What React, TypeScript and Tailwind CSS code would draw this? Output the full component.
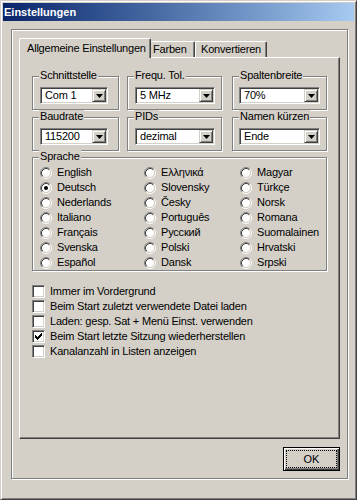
import React from 'react';

const LANGS = [
  ['English', 'Deutsch', 'Nederlands', 'Italiano', 'Français', 'Svenska', 'Español'],
  ['Ελληνικά', 'Slovensky', 'Česky', 'Português', 'Русский', 'Polski', 'Dansk'],
  ['Magyar', 'Türkçe', 'Norsk', 'Romana', 'Suomalainen', 'Hrvatski', 'Srpski'],
];

const OPTIONS = [
  { label: 'Immer im Vordergrund', checked: false },
  { label: 'Beim Start zuletzt verwendete Datei laden', checked: false },
  { label: 'Laden: gesp. Sat + Menü Einst. verwenden', checked: false },
  { label: 'Beim Start letzte Sitzung wiederherstellen', checked: true },
  { label: 'Kanalanzahl in Listen anzeigen', checked: false },
];

function Group({ label, className, children }: { label: string; className: string; children?: React.ReactNode }) {
  return (
    <div className={`relative border border-[#808080] shadow-[inset_1px_1px_0_#ffffff,1px_1px_0_#ffffff] ${className}`}>
      <span className="absolute left-[6px] top-[-8px] bg-[#d4d0c8] px-px leading-[13px]">{label}</span>
      {children}
    </div>
  );
}

function Combo({ value, className }: { value: string; className: string }) {
  return (
    <div
      className={`flex h-[17px] border border-t-[#808080] border-l-[#808080] border-r-white border-b-white bg-white p-px shadow-[inset_1px_1px_0_#404040,inset_-1px_-1px_0_#d4d0c8] ${className}`}
    >
      <span className="flex-1 pl-[3px] leading-[13px]">{value}</span>
      <div className="flex w-[14px] items-center justify-center border border-t-[#d4d0c8] border-l-[#d4d0c8] border-r-[#404040] border-b-[#404040] bg-[#d4d0c8] shadow-[inset_1px_1px_0_#ffffff,inset_-1px_-1px_0_#808080]">
        <svg width="7" height="4" viewBox="0 0 7 4">
          <polygon points="0,0 7,0 3.5,4" fill="#000" />
        </svg>
      </div>
    </div>
  );
}

function Radio({ checked }: { checked?: boolean }) {
  return (
    <svg width="12" height="12" viewBox="0 0 12 12" className="shrink-0">
      <circle cx="6" cy="6" r="4" fill="#ffffff" />
      <path d="M2.11 9.89A5.5 5.5 0 0 1 9.89 2.11" fill="none" stroke="#808080" />
      <path d="M9.89 2.11A5.5 5.5 0 0 1 2.11 9.89" fill="none" stroke="#ffffff" />
      <path d="M2.82 9.18A4.5 4.5 0 0 1 9.18 2.82" fill="none" stroke="#404040" />
      <path d="M9.18 2.82A4.5 4.5 0 0 1 2.82 9.18" fill="none" stroke="#d4d0c8" />
      {checked && <circle cx="6" cy="6" r="2" fill="#000000" />}
    </svg>
  );
}

function Checkbox({ checked }: { checked?: boolean }) {
  return (
    <div className="h-[13px] w-[13px] shrink-0 border border-t-[#808080] border-l-[#808080] border-r-white border-b-white bg-white shadow-[inset_1px_1px_0_#404040,inset_-1px_-1px_0_#d4d0c8]">
      {checked && (
        <svg width="11" height="11" viewBox="0 0 11 11">
          <rect x="2" y="4" width="1" height="3" fill="#000" />
          <rect x="3" y="5" width="1" height="3" fill="#000" />
          <rect x="4" y="6" width="1" height="3" fill="#000" />
          <rect x="5" y="5" width="1" height="3" fill="#000" />
          <rect x="6" y="4" width="1" height="3" fill="#000" />
          <rect x="7" y="3" width="1" height="3" fill="#000" />
          <rect x="8" y="2" width="1" height="3" fill="#000" />
        </svg>
      )}
    </div>
  );
}

export default function App() {
  return (
    <div className="h-[500px] w-[357px] border border-t-[#d4d0c8] border-l-[#d4d0c8] border-r-[#404040] border-b-[#404040] bg-[#d4d0c8] p-[2px] font-['Liberation_Sans',Arial,sans-serif] text-[11px] tracking-[-0.2px] text-black shadow-[inset_1px_1px_0_#ffffff,inset_-1px_-1px_0_#808080]">
      {/* title bar */}
      <div className="flex h-[18px] items-center bg-gradient-to-r from-[#0a246a] to-[#a6caf0] pl-px text-[11px] font-bold tracking-normal text-white">
        Einstellungen
      </div>

      {/* etched frame */}
      <div className="ml-[8px] mt-[8px] flex h-[450px] w-[337px] flex-col border border-[#808080] pb-[7px] pl-[7px] pt-[8px] shadow-[inset_1px_1px_0_#ffffff,1px_1px_0_#ffffff]">
        <div className="flex w-[321px] flex-col">
          {/* tabs */}
          <div className="flex h-[19px] items-end">
            <div className="relative top-px z-10 flex h-[20px] w-[132px] items-center rounded-t-[2px] border-l border-r border-t border-l-white border-r-[#404040] border-t-white bg-[#d4d0c8] pl-[7px] shadow-[inset_-1px_0_0_#808080]">
              Allgemeine Einstellungen
            </div>
            <div className="flex h-[16px] w-[44px] items-center rounded-t-[2px] border-r border-t border-r-[#404040] border-t-white pl-[2px] shadow-[inset_-1px_0_0_#808080]">
              Farben
            </div>
            <div className="flex h-[16px] w-[72px] items-center rounded-t-[2px] border-l border-r border-t border-l-white border-r-[#404040] border-t-white pl-[5px] shadow-[inset_-1px_0_0_#808080]">
              Konvertieren
            </div>
          </div>

          {/* panel */}
          <div className="h-[382px] border border-b-[#404040] border-l-white border-r-[#404040] border-t-white pl-[12px] pt-[18px] shadow-[inset_-1px_-1px_0_#808080]">
            <div className="flex">
              <div className="flex flex-col gap-[7px]">
                <Group label="Schnittstelle" className="h-[34px] w-[87px] pl-[7px] pt-[10px]">
                  <Combo value="Com 1" className="w-[68px]" />
                </Group>
                <Group label="Baudrate" className="h-[34px] w-[87px] pl-[7px] pt-[10px]">
                  <Combo value="115200" className="w-[68px]" />
                </Group>
              </div>
              <div className="ml-[8px] flex flex-col gap-[7px]">
                <Group label="Frequ. Tol." className="h-[34px] w-[95px] pl-[7px] pt-[10px]">
                  <Combo value="5 MHz" className="w-[80px]" />
                </Group>
                <Group label="PIDs" className="h-[34px] w-[95px] pl-[7px] pt-[10px]">
                  <Combo value="dezimal" className="w-[80px]" />
                </Group>
              </div>
              <div className="ml-[10px] flex flex-col gap-[7px]">
                <Group label="Spaltenbreite" className="h-[34px] w-[95px] pl-[6px] pt-[10px]">
                  <Combo value="70%" className="w-[81px]" />
                </Group>
                <Group label="Namen kürzen" className="h-[34px] w-[95px] pl-[6px] pt-[10px]">
                  <Combo value="Ende" className="w-[81px]" />
                </Group>
              </div>
            </div>

            <Group label="Sprache" className="mt-[6px] flex h-[114px] w-[295px] pl-[7px] pt-[7px]">
              {LANGS.map((col, ci) => (
                <div key={ci} className={ci === 0 ? 'w-[104px] shrink-0' : ci === 1 ? 'w-[96px] shrink-0' : 'min-w-0 flex-1'}>
                  {col.map((name) => (
                    <div key={name} className="flex h-[15px] items-center">
                      <Radio checked={name === 'Deutsch'} />
                      <span className="ml-[5px] whitespace-nowrap leading-[13px]">{name}</span>
                    </div>
                  ))}
                </div>
              ))}
            </Group>

            <div className="mt-[13px]">
              {OPTIONS.map((o) => (
                <div key={o.label} className="flex h-[15px] items-center">
                  <Checkbox checked={o.checked} />
                  <span className="ml-[5px] leading-[13px]">{o.label}</span>
                </div>
              ))}
            </div>
          </div>

          {/* OK button */}
          <button className="mt-[8px] flex h-[24px] w-[57px] self-end border border-black bg-[#d4d0c8] p-[2px] shadow-[inset_1px_1px_0_#ffffff,inset_-1px_-1px_0_#404040,inset_-2px_-2px_0_#808080]">
            <span className="flex flex-1 items-center justify-center border border-dotted border-black leading-[13px] tracking-normal">
              OK
            </span>
          </button>
        </div>
      </div>
    </div>
  );
}
